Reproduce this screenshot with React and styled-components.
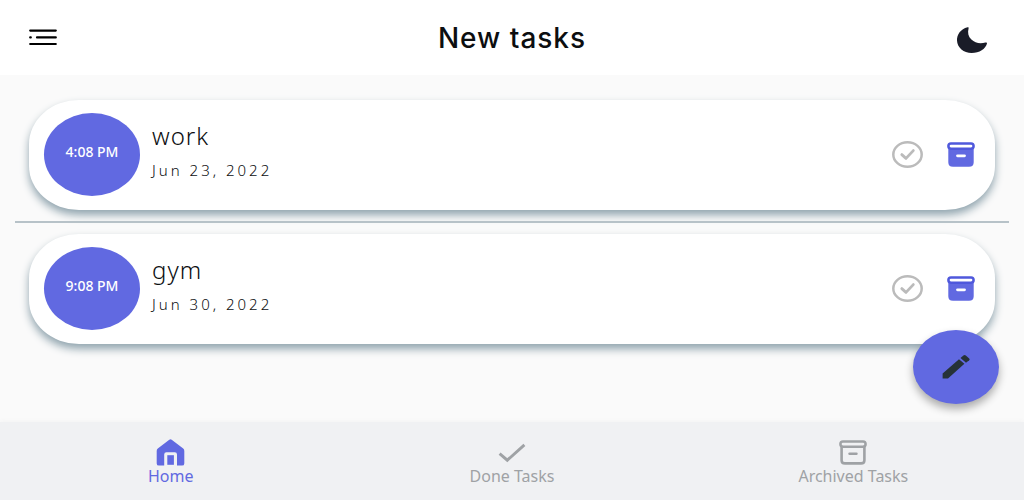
import React from "react";
import styled, { createGlobalStyle } from "styled-components";

const PRIMARY = "#6169e1";
const MUTED = "#9fa2a5";

const GlobalStyle = createGlobalStyle`
  * { box-sizing: border-box; }
  body {
    margin: 0;
    background: #fafafa;
    font-family: "Noto Sans", "Open Sans", sans-serif;
    color: #0c0e10;
  }
`;

const Screen = styled.div`
  min-height: 100vh;
  display: flex;
  flex-direction: column;
`;

const AppBar = styled.header`
  display: grid;
  grid-template-columns: 60px 1fr 60px;
  align-items: center;
  height: 75px;
  padding: 0 13px;
  background: #fff;
`;

const Title = styled.h1`
  margin: 0;
  text-align: center;
  font-family: Inter, sans-serif;
  font-size: 28px;
  line-height: 36px;
  font-weight: 500;
  letter-spacing: 1px;
`;

const IconButton = styled.button`
  display: inline-flex;
  align-items: center;
  justify-content: center;
  padding: ${(p) => p.$pad || "0"};
  border: 0;
  background: none;
  color: ${(p) => p.$color || "#000"};
  cursor: pointer;
`;

const Content = styled.main`
  flex: 1;
  padding: 25px 15px;
`;

const TaskList = styled.ul`
  list-style: none;
  margin: 0;
  padding: 0;
`;

const TaskItem = styled.li`
  padding: 0 14px;
  & + & {
    margin-top: 11px;
    padding-top: 11px;
    position: relative;
    border-top: 2px solid #b7c2c8;
  }
`;

const Card = styled.article`
  display: flex;
  align-items: center;
  gap: 12px;
  min-height: 110px;
  padding: 12px 20px 14px 15px;
  border-radius: 50px / 44px;
  background: #fff;
  box-shadow: 0 5px 9px #90a4ae;
`;

const TimeBadge = styled.time`
  display: grid;
  place-items: center;
  flex: none;
  width: 96px;
  height: 83px;
  padding-bottom: 4px;
  border-radius: 50%;
  background: ${PRIMARY};
  color: #fff;
  font-size: 14px;
  line-height: 20px;
  font-weight: 500;
`;

const TaskText = styled.div`
  flex: 1;
  padding-bottom: 8px;
`;

const TaskName = styled.h2`
  margin: 0 0 8px;
  font-size: 24px;
  line-height: 32px;
  font-weight: 300;
  letter-spacing: 1px;
`;

const TaskDate = styled.p`
  margin: 0;
  font-size: 15px;
  line-height: 20px;
  font-weight: 300;
  letter-spacing: 3px;
`;

const Actions = styled.div`
  display: flex;
  align-items: center;
  gap: 24px;
`;

const Fab = styled.button`
  position: fixed;
  right: 25px;
  bottom: 96px;
  display: grid;
  place-items: center;
  width: 86px;
  height: 74px;
  padding: 0;
  border: 0;
  border-radius: 50%;
  background: ${PRIMARY};
  color: #263238;
  box-shadow: 0 5px 9px rgba(0, 0, 0, 0.32);
  cursor: pointer;
`;

const BottomNav = styled.nav`
  display: grid;
  grid-template-columns: repeat(3, 1fr);
  height: 78px;
  padding-top: 17px;
  background: #f0f1f3;
  box-shadow: 0 0 5px #f0f0f0;
`;

const NavLink = styled.a`
  display: flex;
  flex-direction: column;
  align-items: center;
  color: ${(p) => (p.$active ? PRIMARY : MUTED)};
  font-size: 16px;
  line-height: 20px;
  text-decoration: none;
`;

const Svg = styled.svg`
  display: block;
  width: ${(p) => p.$w}px;
  height: ${(p) => p.$h}px;
  fill: none;
  stroke: currentColor;
  stroke-linecap: round;
  stroke-linejoin: round;
`;

const Icon = ({ w, h, box, children }) => (
  <Svg $w={w} $h={h} viewBox={box || `0 0 ${w} ${h}`} aria-hidden="true">
    {children}
  </Svg>
);

const MenuIcon = () => (
  <Icon w={28} h={18}>
    <path d="M1.2 1.6H26.8M8 8.4H26.8M1.2 8.4H1.8M1.2 15H26.8" strokeWidth="2.2" />
  </Icon>
);

const MoonIcon = () => (
  <Icon w={32} h={28}>
    <path
      d="M11.6 1.2C4.6 3 0.8 8.6 1 14.6C1.2 21.8 7.8 27 15.6 27C23.6 27 29.4 23.2 31 17.6C31.1 16.7 30.5 16.3 29.4 16.5C24.4 18 19 17.2 15.4 13.6C12.3 10.4 11.4 6.6 12.6 2.2C12.8 1.4 12.3 1 11.6 1.2Z"
      fill="currentColor"
      stroke="none"
    />
  </Icon>
);

const CheckCircleIcon = () => (
  <Icon w={31} h={27}>
    <ellipse cx="15.5" cy="13.5" rx="14.2" ry="12.2" strokeWidth="2.5" />
    <path d="M9.8 13.6L14 17.4L21.3 9.6" strokeWidth="2.8" />
  </Icon>
);

const ArchiveShape = ({ filled }) => (
  <>
    <path
      d="M2.6 7V20.2Q2.6 23.4 6 23.4H22Q25.4 23.4 25.4 20.2V7"
      fill={filled ? "currentColor" : "none"}
      strokeWidth="2.6"
    />
    <rect
      x="1.4" y="1.5" width="25.2" height="5.2" rx="2.6"
      fill={filled ? "#fff" : "none"}
      stroke={filled ? "#4f58dc" : "currentColor"}
      strokeWidth="2.5"
    />
    <path
      d="M10.5 13.8H17.5"
      stroke={filled ? "#fff" : "currentColor"}
      strokeWidth={filled ? 2.8 : 2.4}
    />
  </>
);

const HomeIcon = () => (
  <Icon w={29} h={27}>
    <path
      d="M13.3 0.8Q14.5 -0.1 15.7 0.8L27.2 9.6Q28.3 10.5 28.3 12V24.4Q28.3 26.6 26 26.6H21V15.5Q21 13.3 18.8 13.3H10.4Q8.2 13.3 8.2 15.5V26.6H3Q0.7 26.6 0.7 24.4V12Q0.7 10.5 1.8 9.6Z"
      fill="currentColor"
      stroke="none"
    />
    <rect x="11.3" y="16.2" width="6.6" height="9.6" fill="currentColor" stroke="none" />
  </Icon>
);

const CheckIcon = () => (
  <Icon w={28} h={27}>
    <path d="M1.6 14.6L9.3 21.2L26.4 5.9" strokeWidth="2.9" strokeLinecap="butt" strokeLinejoin="miter" />
  </Icon>
);

const PencilIcon = () => (
  <Icon w={28} h={26}>
    <g fill="currentColor" stroke="none">
      <path d="M0.6 19.6L17 5.2L22.4 9.8L6 24.4H0.6Z" />
      <path d="M18.5 4L21.4 1.4Q22.6 0.5 23.8 1.4L27.2 4.4Q28.1 5.3 27.2 6.3L24 8.8Z" />
    </g>
  </Icon>
);

const tasks = [
  { name: "work", time: "4:08 PM", date: "Jun 23, 2022" },
  { name: "gym", time: "9:08 PM", date: "Jun 30, 2022" },
];

const Task = ({ name, time, date }) => (
  <TaskItem>
    <Card>
      <TimeBadge>{time}</TimeBadge>
      <TaskText>
        <TaskName>{name}</TaskName>
        <TaskDate>{date}</TaskDate>
      </TaskText>
      <Actions>
        <IconButton type="button" $color="#bbb" aria-label="Mark as done">
          <CheckCircleIcon />
        </IconButton>
        <IconButton type="button" $color={PRIMARY} aria-label="Archive">
          <Icon w={28} h={25}>
            <ArchiveShape filled />
          </Icon>
        </IconButton>
      </Actions>
    </Card>
  </TaskItem>
);

export default function App() {
  return (
    <Screen>
      <GlobalStyle />
      <AppBar>
        <IconButton type="button" aria-label="Open menu">
          <MenuIcon />
        </IconButton>
        <Title>New tasks</Title>
        <IconButton type="button" $color="#1a1c28" $pad="5px 18px 0 0" aria-label="Dark mode">
          <MoonIcon />
        </IconButton>
      </AppBar>
      <Content>
        <TaskList>
          {tasks.map((task) => (
            <Task key={task.name} {...task} />
          ))}
        </TaskList>
      </Content>
      <Fab type="button" aria-label="Add task">
        <PencilIcon />
      </Fab>
      <BottomNav>
        <NavLink href="#home" $active>
          <HomeIcon />
          Home
        </NavLink>
        <NavLink href="#done">
          <CheckIcon />
          Done Tasks
        </NavLink>
        <NavLink href="#archived">
          <Icon w={28} h={27} box="0 -1 28 27">
            <ArchiveShape />
          </Icon>
          Archived Tasks
        </NavLink>
      </BottomNav>
    </Screen>
  );
}
